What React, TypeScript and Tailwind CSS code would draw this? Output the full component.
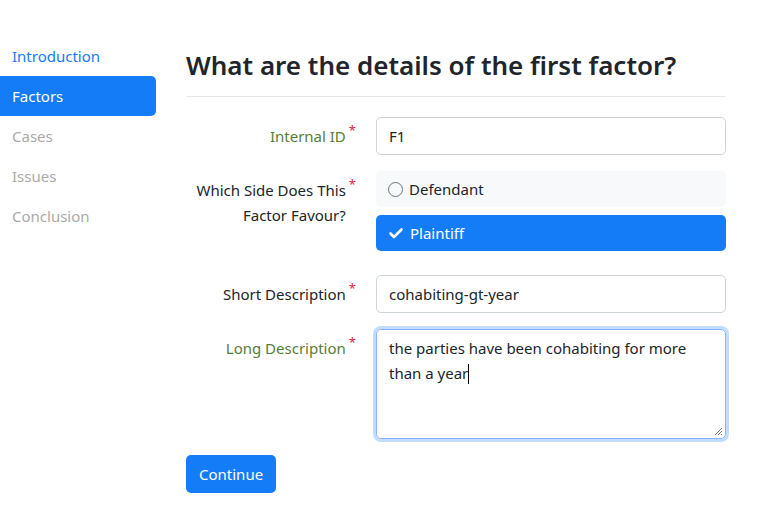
import React from "react";

const Req = () => <span className="ml-[3px] text-[13px] align-top leading-none text-[#e0243a]">*</span>;

export default function App() {
  return (
    <div className="min-h-[510px] w-[777px] bg-white text-[15px] text-[#212529]" style={{ fontFamily: '"Noto Sans", sans-serif' }}>
      <div className="flex pt-[36px]">
        <nav className="flex w-[156px] flex-col">
          <div className="flex h-[40px] items-center px-[12px] text-[#157cf7]">Introduction</div>
          <div className="flex h-[40px] items-center rounded-r-[5px] bg-[#157cf7] px-[12px] text-white">Factors</div>
          <div className="flex h-[40px] items-center px-[12px] text-[#aaaaaa]">Cases</div>
          <div className="flex h-[40px] items-center px-[12px] text-[#aaaaaa]">Issues</div>
          <div className="flex h-[40px] items-center px-[12px] text-[#aaaaaa]">Conclusion</div>
        </nav>
        <main className="ml-[30px] w-[540px]">
          <h3 className="mt-[12px] border-b border-[#e5e7ea] pb-[14px] text-[26px] font-semibold leading-[34px] text-[#212529]">
            What are the details of the first factor?
          </h3>
          <div className="mt-[20px] flex flex-col">
            <div className="mb-[16px] flex gap-[16px]">
              <label className="w-[174px] pt-[7px] pr-[4px] text-right leading-[24px] text-[#567d38]">Internal ID<Req /></label>
              <div className="flex h-[38px] w-[350px] items-center rounded-[5px] border border-[#ced4da] px-[12px]">F1</div>
            </div>
            <div className="mb-[24px] flex gap-[16px]">
              <label className="w-[174px] pt-[7px] pr-[4px] text-right leading-[25px]">
                Which Side Does This<Req /><br />Factor Favour?<span className="invisible ml-[3px] text-[13px]">*</span>
              </label>
              <div className="flex w-[350px] flex-col gap-[8px]">
                <div className="flex h-[36px] items-center gap-[6px] rounded-[5px] bg-[#f8f9fa] px-[12px]">
                  <span className="h-[15px] w-[15px] rounded-full border-[1.5px] border-[#6c757d]" />
                  <span>Defendant</span>
                </div>
                <div className="flex h-[36px] items-center gap-[6px] rounded-[5px] bg-[#157cf7] px-[12px] text-white">
                  <svg width="16" height="16" viewBox="0 0 16 16" fill="none">
                    <path d="M2.5 8.5 L6 12 L13.5 4.5" stroke="white" strokeWidth="2.6" strokeLinecap="round" strokeLinejoin="round" />
                  </svg>
                  <span>Plaintiff</span>
                </div>
              </div>
            </div>
            <div className="mb-[16px] flex gap-[16px]">
              <label className="w-[174px] pt-[7px] pr-[4px] text-right leading-[24px]">Short Description<Req /></label>
              <div className="flex h-[38px] w-[350px] items-center rounded-[5px] border border-[#ced4da] px-[12px]">cohabiting-gt-year</div>
            </div>
            <div className="mb-[16px] flex gap-[16px]">
              <label className="w-[174px] pt-[7px] pr-[4px] text-right leading-[24px] text-[#567d38]">Long Description<Req /></label>
              <div className="relative h-[110px] w-[350px] rounded-[5px] border border-[#86b7fe] px-[12px] py-[6px] leading-[25px] shadow-[0_0_0_3px_rgba(13,110,253,0.25)]">
                the parties have been cohabiting for more<br />than a year<span className="relative"><span className="absolute left-0 top-[1px] h-[20px] w-px bg-black" /></span>
                <svg className="absolute bottom-[2px] right-[2px]" width="9" height="9" viewBox="0 0 9 9">
                  <path d="M8 1 L1 8 M8 4 L4 8 M8 7 L7 8" stroke="#777" strokeWidth="1" />
                </svg>
              </div>
            </div>
            <div>
              <button className="h-[38px] rounded-[5px] bg-[#157cf7] px-[13px] text-white">Continue</button>
            </div>
          </div>
        </main>
      </div>
    </div>
  );
}
